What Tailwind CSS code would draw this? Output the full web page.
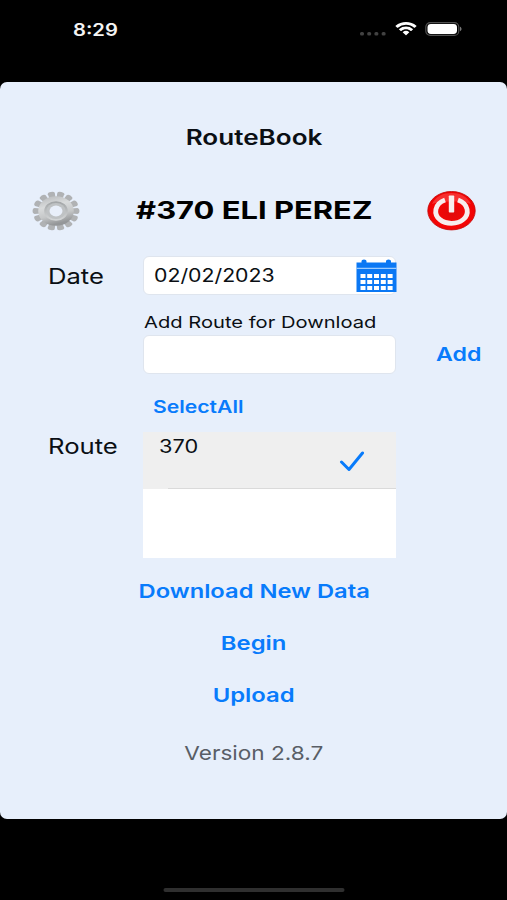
<!DOCTYPE html>
<html lang="en">
<head>
<meta charset="utf-8">
<title>RouteBook</title>
<script src="https://cdn.jsdelivr.net/npm/@tailwindcss/browser@4"></script>
</head>
<body class="bg-black font-['Inter',sans-serif] text-[#0b0f14]">
<div class="flex h-[900px] w-[507px] flex-col overflow-hidden bg-black">
  <!-- Status bar -->
  <header class="flex h-[82px] shrink-0 items-start pt-[17px] pr-[45px] pl-[73px]">
    <span class="origin-left scale-x-[1.188] pt-px text-[17px] leading-[25px] font-semibold text-[#f4f4f4]">8:29</span>
    <div class="ml-auto flex h-[24px] items-center">
      <svg class="mt-[9px] h-[4px] w-[26px]" viewBox="0 0 26 4" fill="#424242"><rect width="4" height="3.4" rx="1.5"/><rect x="7.2" width="4" height="3.4" rx="1.5"/><rect x="14.4" width="4" height="3.4" rx="1.5"/><rect x="21.6" width="4" height="3.4" rx="1.5"/></svg>
      <svg class="ml-[9px] h-[14px] w-[22px]" viewBox="0 0 17 12" preserveAspectRatio="none" fill="#fff"><path d="M8.5 2.4c2.4 0 4.6.9 6.3 2.5.1.1.3.1.5 0l1.2-1.2c.2-.2.2-.4 0-.5a11.6 11.6 0 0 0-16 0c-.2.1-.2.3 0 .5l1.2 1.2c.2.1.4.1.5 0A9.200 9.200 0 0 1 8.500 2.400zM8.500 6.300c1.300 0 2.600.5 3.600 1.400.1.100.3.100.5 0l1.200-1.200c.2-.2.2-.4 0-.5a7.700 7.700 0 0 0-10.600 0c-.2.100-.2.300 0 .5l1.200 1.200c.2.100.4.100.5 0 1-.9 2.300-1.400 3.600-1.400zM10.900 9c.1-.1.100-.4 0-.5a3.700 3.700 0 0 0-4.800 0c-.1.100-.1.400 0 .5l2.100 2.100c.2.200.4.200.6 0z"/></svg>
      <svg class="ml-[8px] h-[14px] w-[37px]" viewBox="0 0 37 14"><rect x="0.800" y="0.600" width="33" height="12.800" rx="4.500" fill="none" stroke="#505050" stroke-width="1.200"/><rect x="2.500" y="2" width="29.500" height="10" rx="3.400" fill="#fff"/><path d="M35 4.800c2 .7 2 3.700 0 4.400z" fill="#777"/></svg>
    </div>
  </header>

  <main class="flex h-[737px] shrink-0 flex-col rounded-[7px] bg-[#e7effb] pt-[41px]">
    <h1 class="flex h-[30px] items-center justify-center text-[21px] font-semibold"><span class="translate-x-[1px] scale-x-[1.242]">RouteBook</span></h1>

    <!-- Driver row -->
    <div class="mt-[37px] flex h-[41px] items-center justify-between pr-[31px] pl-[32px]">
      <svg class="h-[40px] w-[48px]" viewBox="-24 -24 48 48" preserveAspectRatio="none">
        <defs>
          <linearGradient id="metal" x1="0" y1="0" x2="0.300" y2="1"><stop offset="0" stop-color="#b4b6b8"/><stop offset="0.400" stop-color="#d9dbdc"/><stop offset="0.700" stop-color="#c6c8c9"/><stop offset="1" stop-color="#949698"/></linearGradient>
          <linearGradient id="ring" x1="0" y1="0" x2="0" y2="1"><stop offset="0" stop-color="#a0a3a5"/><stop offset="1" stop-color="#d6d8d9"/></linearGradient>
        </defs>
        <g id="teeth" fill="#b0b2b4"></g>
        <circle r="17.800" fill="url(#metal)"/>
        <circle r="11.800" fill="url(#ring)"/>
        <circle r="9.600" fill="#bfc2c4"/>
        <circle r="6.500" fill="#e9effa"/>
      </svg>
      <span class="translate-x-[0.500px] scale-x-[1.288] pt-px text-[24px] leading-[30px] font-bold whitespace-nowrap text-black">#370 ELI PEREZ</span>
      <svg class="h-[40px] w-[49px]" viewBox="0 0 49 40">
        <defs><radialGradient id="red" cx="0.500" cy="0.550" r="0.550"><stop offset="0" stop-color="#e00a0a"/><stop offset="0.600" stop-color="#f50808"/><stop offset="1" stop-color="#f00000"/></radialGradient></defs>
        <ellipse cx="24.500" cy="19.700" rx="23.700" ry="19.200" fill="url(#red)" stroke="#c60d0d" stroke-width="0.900"/>
        <path d="M5 13C9 5 16 2 24.500 2S40 5 44 13C36 9.500 13 9.500 5 13z" fill="#ff8080" opacity="0.350"/>
        <path d="M18 9C7 13 6.500 23.500 12.800 28.500C19 33.600 30 33.600 36.200 28.500C42.500 23.500 42 13 31 9" fill="none" stroke="#f7eeee" stroke-width="4.800"/>
        <rect x="21.800" y="4.500" width="5.400" height="17" rx="0.800" fill="#f7eeee"/>
      </svg>
    </div>

    <!-- Form -->
    <div class="mt-[25px] grid grid-cols-[143px_253px_1fr]">
      <label class="flex h-[39px] items-center pt-[2px] pl-[48px] text-[21.500px]"><span class="origin-left scale-x-[1.190]">Date</span></label>
      <div class="flex h-[39px] items-center rounded-[6px] border border-[#dfe5ee] bg-white pl-[10px] text-[18.500px]">
        <span class="origin-left scale-x-[1.150] pt-[1px]">02/02/2023</span>
        <svg class="mr-[-2px] ml-auto h-[34px] w-[41px] shrink-0" viewBox="0 0 41 34">
          <path fill="#0b78f4" d="M0.500 3.500h5V2Q5.500.5 8 .5t2.500 1.500v1.500h19.500V2Q30 .5 32.500.5T35 2v1.500h5.500V33H.5z"/>
          <path fill="#9bcbff" d="M.5 8.800h40v1.200H.5z"/>
          <path fill="#fff" d="M4.500 15h5v4h-5zM11.200 15h5v4h-5zM18 15h5v4h-5zM24.800 15h5v4h-5zM31.600 15h5v4h-5zM4.500 21h5v4h-5zM11.200 21h5v4h-5zM18 21h5v4h-5zM24.800 21h5v4h-5zM31.600 21h5v4h-5zM4.500 27h5v4h-5zM11.200 27h5v4h-5zM18 27h5v4h-5zM24.800 27h5v4h-5zM31.600 27h5v4h-5z"/>
        </svg>
      </div>
      <div></div>

      <div></div>
      <label class="flex h-[40px] items-center pt-[14px] pl-[0.500px] text-[16.500px] whitespace-nowrap"><span class="origin-left scale-x-[1.221]">Add Route for Download</span></label>
      <div></div>

      <div></div>
      <input aria-label="Add Route for Download" class="h-[39px] w-[253px] rounded-[6px] border border-[#dfe5ee] bg-white px-3 text-[18px] outline-none">
      <button class="flex h-[39px] items-center pt-[2px] pl-[40px] text-[19px] font-semibold text-[#087bfb]"><span class="origin-left scale-x-[1.220]">Add</span></button>

      <div></div>
      <button class="flex h-[58px] items-center pt-[9px] pl-[10px] text-[17px] font-semibold text-[#087bfb]"><span class="origin-left scale-x-[1.244]">SelectAll</span></button>
      <div></div>

      <div class="pl-[48px] text-[21.500px] leading-[28px]"><span class="inline-block origin-left scale-x-[1.194]">Route</span></div>
      <div class="h-[126px] bg-white">
        <div class="flex h-[57px] items-start justify-between bg-[#efefef] pr-[31px] pl-[16px]">
          <span class="origin-left scale-x-[1.209] pt-[1px] text-[18px] leading-[27px]">370</span>
          <svg class="mt-[19px] h-[22px] w-[26px]" viewBox="0 0 26 22" fill="none" stroke="#087bfb" stroke-width="3" stroke-linecap="round" stroke-linejoin="round"><path d="M2.500 11L10 18.500L23.500 2"/></svg>
        </div>
        <div class="mt-[-1px] ml-[25px] h-px bg-[#dadada]"></div>
      </div>
      <div></div>
    </div>

    <!-- Actions -->
    <div class="mt-[8px] flex flex-col items-center text-[19px] font-semibold text-[#087bfb]">
      <button class="h-[52px] translate-x-[0.500px] scale-x-[1.248]">Download New Data</button>
      <button class="h-[52px] translate-x-[0.500px] scale-x-[1.255]">Begin</button>
      <button class="h-[52px] scale-x-[1.255]">Upload</button>
    </div>
    <p class="mt-[15px] flex h-[32px] items-center justify-center text-[19.300px] text-[#595e66]"><span class="translate-x-[0.500px] scale-x-[1.172]">Version 2.8.7</span></p>
  </main>

  <div class="mx-auto mt-[68.500px] h-[4.500px] w-[181px] translate-x-[0.500px] rounded-full bg-[#2f2f2f]"></div>
</div>
<script>
  // Fourteen rounded teeth spaced evenly around the gear
  const g = document.getElementById('teeth');
  for (let i = 0; i < 14; i++) {
    const p = document.createElementNS('http://www.w3.org/2000/svg', 'path');
    p.setAttribute('d', 'M-2.900 -15L-3.600 -21.500Q-3.300 -23.500 0 -23.500Q3.300 -23.500 3.600 -21.500L2.900 -15z');
    p.setAttribute('transform', 'rotate(' + (i * 360 / 14 + 13) + ')');
    g.appendChild(p);
  }
</script>
</body>
</html>
